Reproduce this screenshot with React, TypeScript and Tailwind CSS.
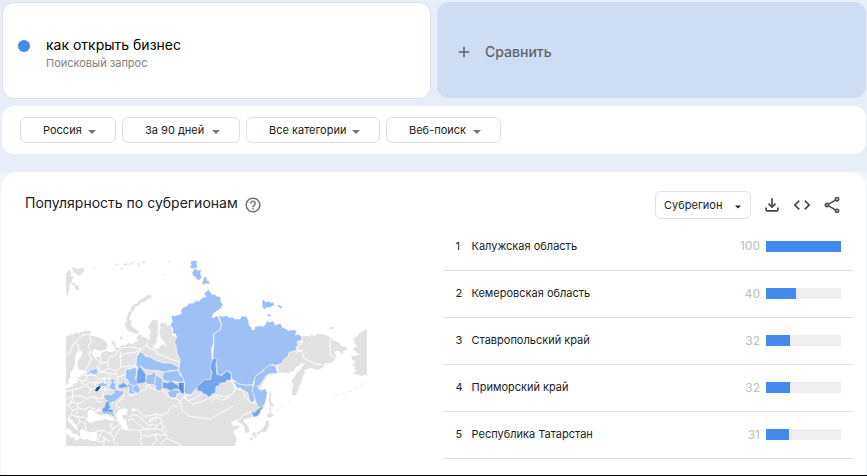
import { MdAdd, MdCode, MdHelpOutline, MdOutlineFileDownload, MdOutlineShare } from 'react-icons/md';

const FILTERS = [
  { id: 'geo', label: 'Регион', value: 'Россия', width: 'w-24' },
  { id: 'time', label: 'Период', value: 'За 90 дней', width: 'w-[118px]' },
  { id: 'category', label: 'Категория', value: 'Все категории', width: 'w-[134px]' },
  { id: 'source', label: 'Тип поиска', value: 'Веб-поиск', width: 'w-[115px]' },
];

const REGIONS = [
  { name: 'Калужская область', score: 100 },
  { name: 'Кемеровская область', score: 40 },
  { name: 'Ставропольский край', score: 32 },
  { name: 'Приморский край', score: 32 },
  { name: 'Республика Татарстан', score: 31 },
];

// mainland and islands without data
const LAND = [
  'M18 245L24 240L30 243L34 236L40 240L46 230L54 236L62 230L70 232L76 225L84 230L90 226L94 233L88 238L94 242L108 245L122 250L134 258L143 268L142 276L137 284L118 288L104 282L94 290L97 300L106 308L118 305L128 290L140 288L150 292L166 288L166 278L160 270L153 260L164 258L166 270L172 278L180 280L184 270L196 272L204 264L220 268L226 260L237 259L228 250L238 238L250 246L262 250L272 258L269 240L272 226L265 218L269 206L276 196L292 195L294 215L292 230L295 242L288 250L290 262L276 276L290 282L298 280L302 270L312 268L320 276L314 260L304 252L298 232L302 218L298 208L305 202L312 206L316 200L322 212L334 208L336 240L460 300L685 290L712 262L727 244L742 242L750 246L754 238L764 243L772 236L788 238L812 246L816 254L826 258L838 264L844 272L858 276L862 283L848 290L852 297L840 294L835 286L822 290L830 305L824 316L812 325L795 324L788 338L772 345L752 338L732 346L735 354L728 365L724 380L720 388L716 402L708 420L698 424L695 408L700 390L695 376L704 364L712 352L722 344L724 336L732 330L728 322L716 332L708 335L704 346L686 354L662 352L650 356L622 362L600 400L615 405L622 425L615 450L600 470L585 480L568 490L553 492L550 498L562 510L568 522L566 532L556 535L553 518L548 508L540 505L530 496L520 498L513 504L520 512L538 512L538 520L522 526L519 532L530 548L528 562L525 573L18 573Z',
  'M262 121L270 119L275 124L272 130L262 132L254 140L242 144L236 152L226 154L222 166L216 170L214 180L208 186L210 194L216 200L211 207L218 217L230 224L236 230L234 238L222 234L206 228L198 220L194 206L200 198L198 188L204 182L203 174L212 168L214 156L222 148L230 146L236 137L250 130Z',
  'M18 62L22 48L32 46L34 56L30 64L42 64L38 74L34 82L46 84L44 92L54 90L58 104L48 106L46 98L38 90L34 82L28 92L28 106L22 124L18 112Z',
  'M34 40L40 36L46 42L52 38L56 44L62 38L72 38L72 48L66 54L60 62L52 60L48 54L38 52L40 46Z',
  'M165 26h8l2 4h-8zM190 28l9-4 4 5-8 3zM180 40l8-2 2 4h-8zM206 28l8-5 6 2-6 5zM216 20l10-1-4 5zM232 24l6 0 2 6-6 2zM246 20l8-3 4 2-8 6zM324 18h8v4h-6zM312 56l6 0v3h-5zM98 37h6v3h-6z',
  'M178 246l8-2 3 6-6 3zM808 218l10-3 4 4-6 4-9-1z',
  'M921 225L912 226L905 232L900 230L896 240L882 250L880 254L886 258L880 264L892 272L884 278L878 284L888 288L888 292L900 298L885 302L870 305L878 310L876 314L888 318L878 330L886 336L884 344L890 345L880 356L902 362L921 360Z',
  'M628 405L635 418L632 428L634 440L642 452L632 454L634 472L628 470L630 450L626 436L629 424Z',
  'M626 474L634 472L636 478L645 480L636 484L634 488L624 488L620 482Z',
  'M624 495L628 505L624 518L618 530L605 531L596 538L590 536L586 542L578 543L574 538L582 532L590 534L602 526L608 518L614 512L617 498Z',
  'M572 545l7 3-4 9-6-4zM582 543l10-1-4 5-6 1z',
];

// white water on top of the land
const SEAS = [
  'M60 285L66 290L66 300L54 318L52 332L60 345L78 346L80 354L62 358L62 366L54 366L52 384L40 388L36 394L24 398L18 400L18 390L26 386L26 372L32 366L30 354L40 342L46 318L46 300Z',
  'M82 475L86 466L94 464L102 468L112 478L124 482L138 476L146 482L156 486L164 494L156 498L138 492L122 496L104 498L94 504L86 502L78 494L84 484Z',
  'M104 466L118 460L122 466L110 472Z',
  'M172 470L182 462L194 460L204 466L200 472L202 478L186 480L190 492L202 496L196 500L202 512L206 520L196 525L184 521L182 510L172 495L168 482Z',
  'M18 520L26 522L34 528L40 538L50 536L56 544L62 540L58 530L64 522L78 528L94 532L112 528L112 548L108 558L94 558L84 552L70 554L60 548L50 558L40 546L30 548L28 540L18 540Z',
  'M24 488L36 494L40 502L54 518L52 528L46 522L38 512L26 500Z',
  'M214 462L222 459L226 464L232 462L226 468L216 468Z',
];

const LIGHT = [
  'M333 182L345 182L364 176L362 166L368 158L382 152L386 145L400 144L412 134L414 140L430 126L438 126L432 116L440 108L446 103L456 118L466 118L470 124L478 124L484 132L482 140L490 148L484 158L478 164L460 176L456 188L475 182L478 196L485 208L480 224L460 238L462 262L455 280L457 342L452 373L430 376L414 398L405 404L395 418L384 420L372 412L374 384L366 372L364 358L356 350L360 315L350 292L348 272L343 260L350 246L345 236L338 238L338 220L330 210L337 200Z',
  'M475 182L490 184L500 181L506 187L520 187L524 192L540 192L544 183L558 184L562 188L566 200L568 212L574 217L577 225L584 223L584 215L598 212L610 214L618 206L620 196L628 202L640 197L646 210L658 206L664 207L668 218L676 220L684 226L706 224L710 232L706 240L716 238L727 246L724 256L712 260L714 272L708 276L710 286L688 292L684 305L672 312L664 326L645 332L640 328L628 332L624 342L608 346L606 352L588 362L590 376L580 380L580 390L560 391L535 387L526 378L516 374L514 354L500 347L486 360L472 360L470 325L458 305L462 262L460 238L480 224L485 208Z',
  'M645 332L654 356L628 356L616 364L610 376L600 388L600 396L592 392L596 402L604 406L616 400L622 412L620 424L614 450L598 458L592 452L588 442L582 424L570 408L582 390L584 368L590 360L608 350L610 344L628 330Z',
  'M516 374L536 387L560 391L580 390L576 408L584 424L584 440L572 442L566 430L564 414L556 408L544 404L542 398L530 400L524 386Z',
  'M390 20L396 17L412 16L410 28L413 34L411 40L400 42L388 36L394 30ZM396 52L404 40L414 46L424 42L422 56L425 68L420 76L408 74L408 68L398 62ZM426 82L434 64L440 66L442 76L450 80L446 88L436 86L428 92Z',
  'M606 136l6-2 4 6 8 0 2-4 4 6 10 0 4 8-14 8-10 0-8 6-6-8zM650 152l8-3 4 3 8 6-8 2-6-3zM620 180l4-4 8 3 4 4-8 3z',
  'M230 300L236 300L242 292L250 296L256 304L268 305L285 315L310 324L330 324L344 330L356 336L354 346L332 347L312 352L290 346L274 346L254 343L244 334L236 345L228 330Z',
  'M310 352L332 348L355 346L360 360L370 368L372 382L356 382L342 378L330 382L315 378L306 370Z',
  'M260 358L272 358L284 350L292 362L308 372L306 388L308 404L294 408L286 402L288 392L276 388L262 388L256 378Z',
  'M198 342L212 342L228 335L230 352L226 372L238 388L236 396L242 404L234 418L226 410L222 418L204 414L208 400L202 392L206 380L195 366Z',
  'M80 352L90 350L88 342L98 344L110 338L112 346L113 354L104 360L92 354L84 360Z',
  'M152 372L164 370L162 382L168 388L166 398L174 402L162 406L150 402L148 392L154 384Z',
  'M114 384l8 2 4-6 8 6 10-3-1 8-10 4-6-2-8 6-6-6zM38 396l4-3 8 2 2 4-12 0z',
  'M130 422L142 418L152 420L162 414L160 406L172 404L180 408L194 405L190 412L192 418L182 424L174 432L168 436L166 442L156 440L152 448L144 450L140 436L134 434Z',
  'M322 410L336 404L358 405L360 414L350 418L350 426L336 430L326 422Z',
  'M124 470l6-4 8 4 8-4 10 8 6-2 2 12-6 2-4-6-10-2-6-2-6 4z',
];

const MID = [
  'M462 308L470 314L468 326L470 358L486 362L500 347L508 352L514 358L512 376L500 376L498 382L480 385L476 392L468 394L466 414L456 416L454 422L446 426L438 418L428 416L426 410L410 406L414 390L424 384L430 375L452 373L456 350L450 340L454 320Z',
  'M232 345L240 334L248 344L258 360L256 372L260 378L250 384L238 386L228 382L230 366Z',
  'M308 380L322 384L334 378L342 384L354 390L358 402L342 402L334 408L322 402L308 400Z',
  'M176 388L184 388L190 382L196 388L203 390L201 400L194 396L188 400L176 398Z',
  'M134 456L136 444L142 438L148 442L148 450L153 456L146 462L156 463L162 472L152 474L146 470L138 472L128 472L126 462Z',
  'M575 470L586 472L590 464L598 460L610 450L608 462L602 466L600 474L592 484L580 486Z',
];

const BORDERS = [
  // europe
  'M18 300L32 292L34 278L44 262L56 252L68 240L88 238M88 238L94 262L84 270L90 284L88 300L94 312L78 345M48 300L56 286L54 270L46 262M110 338L124 325L120 300M62 358L80 362L78 378L54 374M60 378L76 392L58 400L36 405L18 410M80 362L104 360L116 372L104 384L88 380L78 392L92 402L118 400L130 415L128 430L116 430L104 424L84 430L60 422L36 424L18 432M36 405L40 424L34 438L50 446L66 442L80 430M50 446L56 460L74 464L86 456L104 462M18 452L36 444M34 438L26 452L38 466L52 460M38 466L34 480L52 485L78 488M34 480L24 488M52 485L60 500L50 512L34 502M60 500L76 502M92 402L86 416M104 424L112 440L128 442M56 460L48 474L52 485',
  // western russia
  'M94 290L108 312L124 325L142 322L150 305L164 302L172 288M142 322L146 340L168 348L184 336L180 306L195 296L225 292L244 282L262 270L260 254M110 338L128 350L146 340M168 348L172 366L194 360L198 342M112 352L128 350L148 356L172 356M116 372L132 368L150 372L148 356L128 350M132 368L134 384M104 384L120 382L132 368M148 388L132 392L136 404L150 404M104 384L106 394M118 400L134 404L142 416M172 366L176 388L166 395M168 290L190 278L212 276L244 282M180 306L184 290M262 270L270 282L286 285L290 296L316 304L330 312L356 320M194 360L206 380M184 336L212 332L228 335L230 300L244 282',
  // caucasus, turkey, middle east
  'M74 502L78 528M164 494L176 498L178 510M160 500L150 510L158 522L172 512M158 522L152 536L128 526L112 528M152 536L162 548L160 560L176 573M128 526L120 540L132 548L132 573M120 540L112 560M162 548L180 520M196 525L216 524L238 526L246 540L240 556L250 573M150 560L132 548M112 560L132 560',
  // central asia
  'M194 418L186 432L174 440L168 452L180 458M204 410L212 424L222 418L240 410L256 404L262 390M262 390L284 405L306 402L318 418L330 428L350 432L362 440M362 440L350 455L338 452L330 460L322 474L300 482L294 476L270 482L250 484L238 468L232 462M206 490L218 478L238 484L252 500L270 512L262 522L240 526M204 496L218 492L232 506L252 520M294 476L280 496L266 500L274 490L300 488L306 500L290 512L278 508L270 512M290 512L288 522L262 522M288 522L304 524L312 516L304 506L306 500M304 524L318 538L322 552L348 562L370 573M246 540L262 544L286 538L304 540L318 538M286 538L290 556L276 573M312 516L322 530M318 552L302 566',
  // mongolia, china
  'M362 440L372 425L395 418M372 425L384 438L408 428L430 412M362 440L366 466L388 484L418 488L450 492L480 474L500 464L520 452M372 425L398 448L424 440L450 430L468 420L500 426L516 418L528 400M450 440L470 426L484 436L504 430L510 420M528 400L548 408L560 430L574 442L590 442M520 498L538 494L550 480L575 470',
  // far east
  'M650 356L654 332M718 240L728 262L708 280L726 290L732 310L752 320L764 326L788 330M711 262L730 260M810 250L810 300L828 308M728 285L708 292M516 374L524 386L528 400M480 385L500 378L512 376L528 400L522 410',
];

const ISLANDS = 'M648 470l6-5M654 463l5-4M665 454l7-6M684 440l6-5M824 421l14-2M844 417l12-3M862 411l14-4M884 404l10-5M900 396l21-16';

function Caret({ className }: { className: string }) {
  return (
    <svg viewBox="0 0 8 4" className={`pointer-events-none absolute top-1/2 h-1 ${className}`} aria-hidden="true">
      <path d="M0 0h8L4 4z" fill="currentColor" />
    </svg>
  );
}

function RegionMap() {
  return (
    <svg viewBox="18 15 903 558" className="w-[301px] max-w-full" role="img" aria-label="Карта субрегионов">
      <g fill="#e1e1e1">{LAND.map((d) => <path key={d} d={d} />)}</g>
      <g fill="none" stroke="#fff" strokeWidth="3" strokeLinejoin="round">{BORDERS.map((d) => <path key={d} d={d} />)}</g>
      <g fill="#fff">{SEAS.map((d) => <path key={d} d={d} />)}</g>
      <g fill="#9dc0f5" stroke="#fff" strokeWidth="2" strokeLinejoin="round">{LIGHT.map((d) => <path key={d} d={d} />)}</g>
      <g fill="#72a5ea" stroke="#dce9fb" strokeWidth="2" strokeLinejoin="round">{MID.map((d) => <path key={d} d={d} />)}</g>
      <path d="M356 384l15-1 0 32-6 0-8-14z" fill="#4f8ee2" />
      <path d="M106 403l6-7 8-2 1 5-6 5-2 5-7-1z" fill="#0d47a1" />
      <path d="M240 292l4 5-6 3z" fill="#72a5ea" />
      <path d="M456 188l12-10 14-6M284 388l4-34M206 386l14 6 18-4M220 392l-2 20" fill="none" stroke="#fff" strokeWidth="2" />
      <path d={ISLANDS} fill="none" stroke="#e1e1e1" strokeWidth="2" />
    </svg>
  );
}

export default function App() {
  return (
    <div className="min-h-screen flex flex-col bg-[#e8eef7] font-['Inter','Roboto',sans-serif] text-[#202124]">
      <div className="grid grid-cols-2 gap-1.5 pl-0.5 pr-px pt-0.5">
        <div className="h-[97px] flex items-start gap-4 rounded-xl border border-[#dde2e8] bg-white pl-[15px] pt-8">
          <span className="mt-[5px] size-3 rounded-full bg-[#4489ec]" />
          <div>
            <p className="text-sm leading-5 text-black">как открыть бизнес</p>
            <p className="text-[11px] leading-4 text-[#808080]">Поисковый запрос</p>
          </div>
        </div>
        <button className="h-24 flex items-center gap-3 rounded-xl bg-[#cfddf3] pl-[18px] pt-1 text-sm font-medium text-[#5f6368]">
          <MdAdd className="size-[18px]" />
          Сравнить
        </button>
      </div>

      <div className="mt-[7px] ml-0.5 mr-px h-12 flex items-center gap-1.5 rounded-xl bg-white px-[18px]">
        {FILTERS.map((f) => (
          <div key={f.id} className={`relative ${f.width}`}>
            <select id={f.id} aria-label={f.label} className="block w-full h-[26px] appearance-none rounded-md border border-[#dfe1e5] bg-white pl-[22px] text-[11px] leading-4">
              <option>{f.value}</option>
            </select>
            <Caret className="right-5 w-2 text-[#757575]" />
          </div>
        ))}
      </div>

      <div className="mt-[18px] flex-1 flex flex-col bg-[#f1f4fa] border-b border-black">
        <section className="ml-px mr-px flex-1 rounded-t-2xl bg-white pt-[19px]">
          <header className="h-7 flex items-center px-6">
            <h2 className="pb-1 text-sm">Популярность по субрегионам</h2>
            <button aria-label="Справка" className="ml-1.5 text-[#757575]"><MdHelpOutline className="size-[18px]" /></button>
            <div className="relative ml-auto w-24">
              <select aria-label="Разрешение" className="block w-full h-7 appearance-none rounded-md border border-[#dfe1e5] bg-white pl-2 text-[11px] leading-4">
                <option>Субрегион</option>
              </select>
              <Caret className="right-2.5 w-1.5 text-[#202124]" />
            </div>
            <div className="ml-[11px] flex gap-2.5 text-[#444746]">
              <button aria-label="Скачать"><MdOutlineFileDownload className="size-5" /></button>
              <button aria-label="Код для вставки"><MdCode className="size-5" /></button>
              <button aria-label="Поделиться"><MdOutlineShare className="size-5" /></button>
            </div>
          </header>

          <div className="mt-1 grid grid-cols-2">
            <div className="pl-[65px] pt-[37px]">
              <RegionMap />
            </div>
            <div className="pl-[10px] pr-[13px]">
              <table className="w-full border-collapse text-[11px]">
                <tbody>
                  {REGIONS.map((r, i) => (
                    <tr key={r.name} className="h-[47px] border-b border-[#dfe1e3]">
                      <td className="w-7 pl-3">{i + 1}</td>
                      <td>{r.name}</td>
                      <td className="text-right text-xs text-[#bdbdbd]">{r.score}</td>
                      <td className="w-[93px] pl-1.5 pr-3">
                        <div className="h-[11px] bg-[#eee]">
                          <div className="h-full bg-[#4489ec]" style={{ width: `${r.score}%` }} />
                        </div>
                      </td>
                    </tr>
                  ))}
                </tbody>
              </table>
            </div>
          </div>
        </section>
      </div>
    </div>
  );
}
